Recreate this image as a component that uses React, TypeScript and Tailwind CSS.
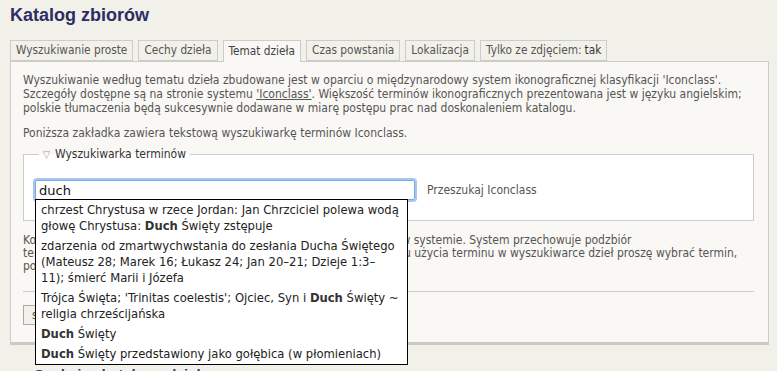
import { useState } from 'react';

const tabs = [
  { label: 'Wyszukiwanie proste' },
  { label: 'Cechy dzieła' },
  { label: 'Temat dzieła', active: true },
  { label: 'Czas powstania' },
  { label: 'Lokalizacja' },
  { label: 'Tylko ze zdjęciem:', value: 'tak' },
];

type Part = { t: string; b?: boolean };
const suggestions: Part[][][] = [
  [
    [{ t: 'chrzest Chrystusa w rzece Jordan: Jan Chrzciciel polewa wodą' }],
    [{ t: 'głowę Chrystusa: ' }, { t: 'Duch', b: true }, { t: ' Święty zstępuje' }],
  ],
  [
    [{ t: 'zdarzenia od zmartwychwstania do zesłania Ducha Świętego' }],
    [{ t: '(Mateusz 28; Marek 16; Łukasz 24; Jan 20–21; Dzieje 1:3–' }],
    [{ t: '11); śmierć Marii i Józefa' }],
  ],
  [
    [{ t: "Trójca Święta; 'Trinitas coelestis'; Ojciec, Syn i " }, { t: 'Duch', b: true }, { t: ' Święty ~' }],
    [{ t: 'religia chrześcijańska' }],
  ],
  [[{ t: 'Duch', b: true }, { t: ' Święty' }]],
  [[{ t: 'Duch', b: true }, { t: ' Święty przedstawiony jako gołębica (w płomieniach)' }]],
];

export default function App() {
  const [query, setQuery] = useState('duch');

  return (
    <div className="relative w-full h-[371px] overflow-hidden bg-[#f2f1e9] text-[#555] font-['DejaVu_Sans_Condensed','Liberation_Sans',sans-serif]">
      <h1 className="pl-[10px] pt-[3px] text-[18px] leading-[24px] font-bold text-[#2c2c66] font-['Liberation_Sans',sans-serif]">
        Katalog zbiorów
      </h1>

      {/* tabs */}
      <div className="flex gap-[5px] pl-[10px] mt-[13px]">
        {tabs.map((tab) => (
          <div
            key={tab.label}
            className={`relative px-[5px] h-[21px] flex items-center text-[11.75px] border border-[#ccc] ${
              tab.active ? 'bg-[#f9f8f4] border-b-0 z-10 h-[22px] text-[#444]' : 'bg-[#f2f1e9]'
            }`}
          >
            {tab.label}
            {tab.value && <span className="ml-[3px] text-[#333]">{tab.value}</span>}
          </div>
        ))}
      </div>

      {/* panel */}
      <div className="ml-[10px] mr-[8px] -mt-px border border-[#ccc] border-b-[3px] border-b-[#c9c9c9] bg-[#f9f8f4] pl-[12px] pr-[14px] pt-[11px] pb-[17px] text-[12px] leading-[14px]">
        <p className="whitespace-nowrap">
          Wyszukiwanie według tematu dzieła zbudowane jest w oparciu o międzynarodowy system ikonograficznej klasyfikacji 'Iconclass'.
          <br />
          Szczegóły dostępne są na stronie systemu <span className="underline">'Iconclass'</span>. Większość terminów ikonograficznych prezentowana jest w języku angielskim;
          <br />
          polskie tłumaczenia będą sukcesywnie dodawane w miarę postępu prac nad doskonaleniem katalogu.
        </p>
        <p className="mt-[11px]">Poniższa zakładka zawiera tekstową wyszukiwarkę terminów Iconclass.</p>

        <fieldset className="mt-[7px] border border-[#ccc] bg-white px-[11px] pb-[20px] pt-[18px]">
          <legend className="ml-[4px] px-[4px] text-[#333]">
            <span className="text-[#999] text-[10px] mr-[5px]">▽</span>Wyszukiwarka terminów
          </legend>
          <div className="flex items-center">
            <input
              value={query}
              onChange={(e) => setQuery(e.target.value)}
              className="w-[380px] h-[20px] px-[3px] border border-[#7aa7e0] rounded-[2px] outline-none shadow-[0_0_0_2px_#a6c8f0] text-[13px] text-[#111] font-['DejaVu_Sans',sans-serif]"
            />
            <span className="ml-[12px]">Przeszukaj Iconclass</span>
          </div>
        </fieldset>

        <p className="mt-[13px] leading-[13px] whitespace-nowrap">
          Końcowa lista terminów obejmuje tylko hasła przypisane do obiektów w systemie. System przechowuje podzbiór
          <br />
          terminów Iconclass, które użyto do opisu dzieł sztuki ze zbiorów. W celu użycia terminu w wyszukiwarce dzieł proszę wybrać termin,
          <br />
          po czym kliknąć przycisk.
        </p>

        <div className="mt-[18px] border-t border-[#ccc] pt-[13px]">
          <button className="h-[20px] px-[8px] border border-[#aaa] bg-[#f2f1e9] text-[12px] text-[#555]">szukaj</button>
        </div>
      </div>

      <h2 className="pl-[34px] mt-[19px] text-[15px] font-bold text-[#3a3a70] font-['Liberation_Sans',sans-serif]">
        Szukaj w katalogu dzieł
      </h2>

      {/* autocomplete */}
      <ul className="absolute left-[35px] top-[199px] w-[373px] border border-black bg-white text-[11.6px] leading-[16px] text-[#222] font-['DejaVu_Sans',sans-serif]">
        {suggestions.map((item, i) => (
          <li key={i} className="px-[5px] py-[2px] whitespace-nowrap">
            {item.map((line, j) => (
              <div key={j}>
                {line.map((p, k) =>
                  p.b ? (
                    <b key={k} className="font-bold text-[#333]">{p.t}</b>
                  ) : (
                    <span key={k}>{p.t}</span>
                  )
                )}
              </div>
            ))}
          </li>
        ))}
      </ul>
    </div>
  );
}
